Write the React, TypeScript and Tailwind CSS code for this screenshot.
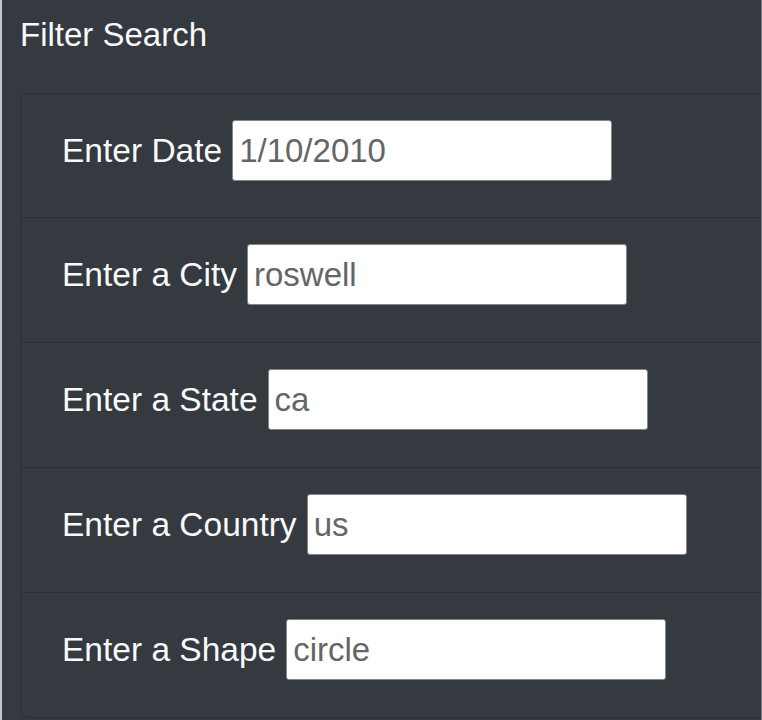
const filters = [
  { id: "datetime", label: "Enter Date", value: "1/10/2010" },
  { id: "city", label: "Enter a City", value: "roswell" },
  { id: "state", label: "Enter a State", value: "ca" },
  { id: "country", label: "Enter a Country", value: "us" },
  { id: "shape", label: "Enter a Shape", value: "circle" },
];

const App = () => {
  return (
    <div
      className="h-[720px] w-full overflow-hidden bg-[#343a40] border-l-2 border-r border-l-[#c4c6c8] border-r-[#7d8185] text-white"
      style={{ fontFamily: '"Liberation Sans", Arial, sans-serif' }}
    >
      {/* Titulo */}
      <h5 className="pl-[18px] pt-[15px] text-[33px] leading-[40px] font-normal text-[#f8f9fa]">
        Filter Search
      </h5>

      {/* Lista de filtros */}
      <ul className="ml-[18px] mt-[38px] w-[800px] rounded-[8px] border border-[#2b3035]">
        {filters.map((f, index) => (
          <li
            key={f.id}
            className={`flex items-center gap-[10px] pl-[41px] pt-[26px] ${
              index > 0 ? "border-t border-[#2b3035] pb-[37px]" : "pb-[36px]"
            }`}
          >
            <label htmlFor={f.id} className="text-[33.5px] leading-[40px] text-[#f8f9fa]">
              {f.label}
            </label>
            <input
              id={f.id}
              type="text"
              defaultValue={f.value}
              className="h-[61px] w-[380px] rounded-[3px] border border-[#858585] bg-white px-[6px] text-[33px] text-[#656565] outline-none"
            />
          </li>
        ))}
      </ul>
    </div>
  );
};

export default App;
